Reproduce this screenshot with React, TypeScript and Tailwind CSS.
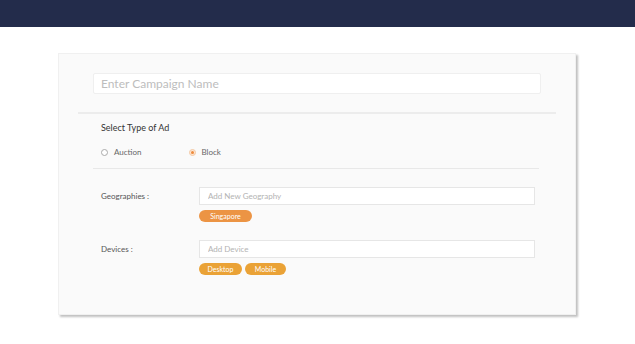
import React from 'react'

const font = { fontFamily: 'Lato, "Open Sans", sans-serif' }

function Radio({ label, checked }: { label: string; checked?: boolean }) {
  return (
    <label className="flex items-center gap-[6px] text-[8px] text-[#666]">
      {checked ? (
        <span className="w-[7px] h-[7px] rounded-full border border-[#f3c9a5] bg-[#fde6d3] flex items-center justify-center">
          <span className="w-[3px] h-[3px] rounded-full bg-[#ee8a3c]" />
        </span>
      ) : (
        <span className="w-[7px] h-[7px] rounded-full border border-[#aaa] bg-white" />
      )}
      {label}
    </label>
  )
}

function Chip({ text, color, w }: { text: string; color: string; w: string }) {
  return (
    <span className={`h-[12px] rounded-full text-[7px] text-white flex items-center justify-center ${w} ${color}`}>
      {text}
    </span>
  )
}

function FieldRow({ label, placeholder, chips }: { label: string; placeholder: string; chips: React.ReactNode }) {
  return (
    <div className="flex pl-[42px]">
      <div className="w-[98px] h-[18px] flex items-center text-[8px] text-[#555]">{label}</div>
      <div className="flex flex-col">
        <input
          placeholder={placeholder}
          className="block w-[336px] h-[18px] bg-white border border-[#e6e6e6] px-[8px] text-[8px] placeholder:text-[#b3b3b3] outline-none"
        />
        <div className="flex gap-[3px] mt-[5px]">{chips}</div>
      </div>
    </div>
  )
}

export default function App() {
  return (
    <div className="w-[635px] h-[344px] bg-white" style={font}>
      <div className="h-[27px] bg-[#232c4b]" />
      <div className="ml-[58px] mt-[26px] w-[518px] h-[262px] bg-[#fafafa] border border-[#f0f0f0] shadow-[2px_2px_2px_rgba(0,0,0,0.25)]">
        <div className="px-[34px] pt-[19px]">
          <input
            placeholder="Enter Campaign Name"
            className="block w-full h-[21px] bg-white border border-[#efefef] rounded-[2px] px-[7px] text-[12px] placeholder:text-[#bdbdbd] outline-none"
          />
        </div>
        <div className="mx-[19px] mt-[18px] h-[2px] bg-[#ececec]" />
        <div className="pl-[42px] mt-[8px] h-[12px] flex items-center text-[9px] text-[#333]">Select Type of Ad</div>
        <div className="pl-[42px] mt-[12px] flex gap-[47px]">
          <Radio label="Auction" />
          <Radio label="Block" checked />
        </div>
        <div className="ml-[34px] mr-[36px] mt-[10px] h-px bg-[#e8e8e8]" />
        <div className="mt-[18px] flex flex-col gap-[18px]">
          <FieldRow
            label="Geographies :"
            placeholder="Add New Geography"
            chips={<Chip text="Singapore" color="bg-[#ec9444]" w="w-[53px]" />}
          />
          <FieldRow
            label="Devices :"
            placeholder="Add Device"
            chips={
              <>
                <Chip text="Desktop" color="bg-[#eaa236]" w="w-[43px]" />
                <Chip text="Mobile" color="bg-[#eaa236]" w="w-[41px]" />
              </>
            }
          />
        </div>
      </div>
    </div>
  )
}
